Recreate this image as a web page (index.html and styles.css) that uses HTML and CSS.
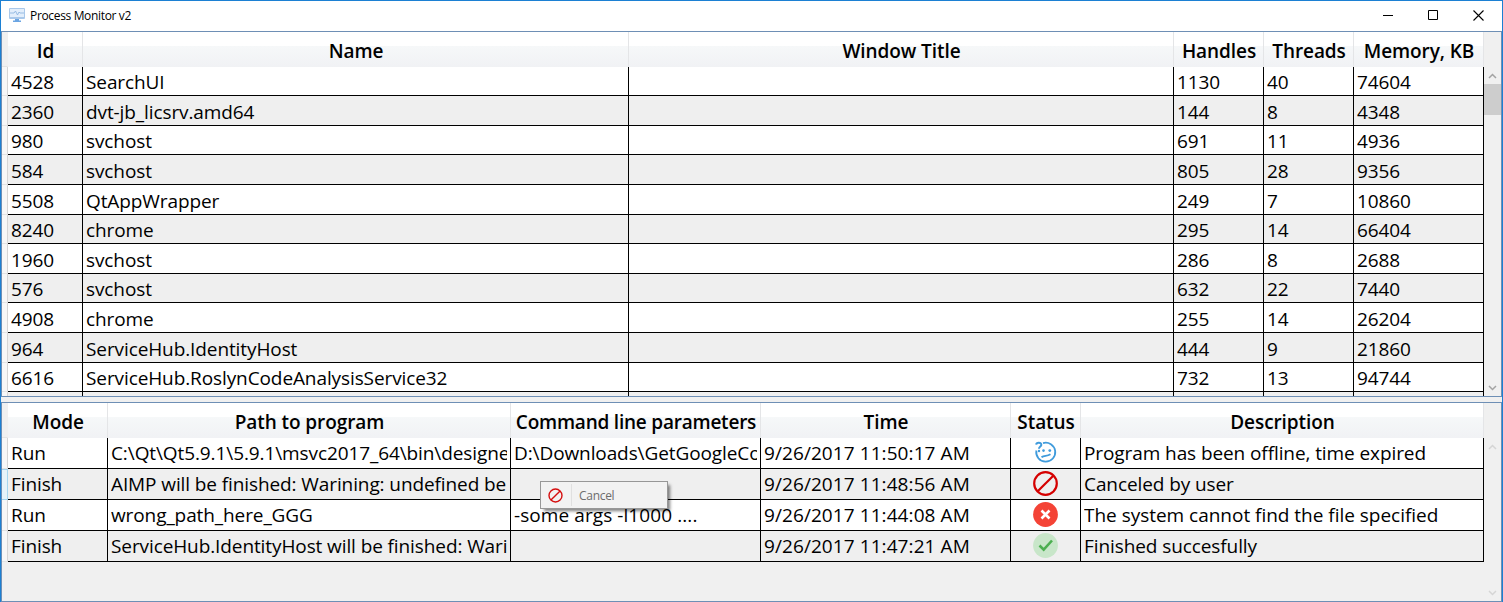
FILE: index.html
```html
<!DOCTYPE html>
<html lang="en">
<head>
<meta charset="utf-8">
<title>Process Monitor v2</title>
<link rel="stylesheet" href="styles.css">
</head>
<body>
<div class="window">
  <header class="titlebar">
    <svg class="app-icon" width="16" height="15" viewBox="0 0 16 15"><rect width="16" height="11" rx="1" fill="#a9c8ea"/><rect x="1" y="1" width="14" height="8" fill="#e2eefb"/><path d="M1 5h4l1.500-2 2 4 1.500-3 1 1h4" fill="none" stroke="#8fb6e0" stroke-width=".9"/><path d="M6 11h4v1.500h2V14H4v-1.500h2z" fill="#6ba5e3"/></svg>
    <span class="title">Process Monitor v2</span>
    <div class="controls">
      <svg width="11" height="11" viewBox="0 0 11 11"><path d="M0 5.500h10" stroke="#000"/></svg>
      <svg width="11" height="11" viewBox="0 0 11 11"><path d="M.5.500h9v9h-9z" fill="none" stroke="#000"/></svg>
      <svg width="11" height="11" viewBox="0 0 11 11"><path d="M.5.500l10 10M10.500.500l-10 10" stroke="#000" stroke-width="1.100"/></svg>
    </div>
  </header>

  <section class="pane processes">
    <div class="gutter"><i class="corner"></i><i class="h29"></i><i class="h30"></i><i class="h29"></i><i class="h30"></i><i class="h30"></i><i class="h29"></i><i class="h30"></i><i class="h29"></i><i class="h30"></i><i class="h30"></i><i class="h29"></i><i class="h30"></i></div>
    <div class="table">
      <div class="row head"><b>Id</b><b>Name</b><b>Window Title</b><b>Handles</b><b>Threads</b><b>Memory, KB</b></div>
      <div class="row h29"><div><span>4528</span></div><div><span>SearchUI</span></div><div></div><div><span>1130</span></div><div><span>40</span></div><div><span>74604</span></div></div>
      <div class="row h30 alt"><div><span>2360</span></div><div><span>dvt-jb_licsrv.amd64</span></div><div></div><div><span>144</span></div><div><span>8</span></div><div><span>4348</span></div></div>
      <div class="row h29"><div><span>980</span></div><div><span>svchost</span></div><div></div><div><span>691</span></div><div><span>11</span></div><div><span>4936</span></div></div>
      <div class="row h30 alt"><div><span>584</span></div><div><span>svchost</span></div><div></div><div><span>805</span></div><div><span>28</span></div><div><span>9356</span></div></div>
      <div class="row h30"><div><span>5508</span></div><div><span>QtAppWrapper</span></div><div></div><div><span>249</span></div><div><span>7</span></div><div><span>10860</span></div></div>
      <div class="row h29 alt"><div><span>8240</span></div><div><span>chrome</span></div><div></div><div><span>295</span></div><div><span>14</span></div><div><span>66404</span></div></div>
      <div class="row h30"><div><span>1960</span></div><div><span>svchost</span></div><div></div><div><span>286</span></div><div><span>8</span></div><div><span>2688</span></div></div>
      <div class="row h29 alt"><div><span>576</span></div><div><span>svchost</span></div><div></div><div><span>632</span></div><div><span>22</span></div><div><span>7440</span></div></div>
      <div class="row h30"><div><span>4908</span></div><div><span>chrome</span></div><div></div><div><span>255</span></div><div><span>14</span></div><div><span>26204</span></div></div>
      <div class="row h30 alt"><div><span>964</span></div><div><span>ServiceHub.IdentityHost</span></div><div></div><div><span>444</span></div><div><span>9</span></div><div><span>21860</span></div></div>
      <div class="row h29"><div><span>6616</span></div><div><span>ServiceHub.RoslynCodeAnalysisService32</span></div><div></div><div><span>732</span></div><div><span>13</span></div><div><span>94744</span></div></div>
      <div class="row h30 alt"><div></div><div></div><div></div><div></div><div></div><div></div></div>
    </div>
    <div class="scrollbar">
      <svg width="9" height="6" viewBox="0 0 9 6"><path d="M1 5l3.500-3.500L8 5" /></svg>
      <div class="thumb"></div>
      <svg class="down" width="9" height="6" viewBox="0 0 9 6"><path d="M1 1l3.500 3.500L8 1"/></svg>
    </div>
  </section>

  <section class="pane actions">
    <div class="gutter"><i class="corner"></i><i class="h31"></i><i class="h31 hot"></i><i class="h31"></i><i class="h31"></i></div>
    <div class="table">
      <div class="row head"><b>Mode</b><b>Path to program</b><b class="tight">Command line parameters</b><b>Time</b><b>Status</b><b>Description</b></div>
      <div class="row h31"><div><span>Run</span></div><div><span>C:\Qt\Qt5.9.1\5.9.1\msvc2017_64\bin\designe</span></div><div><span>D:\Downloads\GetGoogleCo</span></div><div class="time"><span>9/26/2017 11:50:17 AM</span></div>
        <div class="status"><svg width="25" height="25" viewBox="0 0 25 25" fill="none" stroke="#3f9bdc" stroke-width="1.800"><path d="M10 3.100a9.500 9.500 0 1 1-6.600 7.400"/><path d="M3.200 4.600C3.400 2 8.500 2 8.300 5 8.200 6.600 6 6.500 6 8.700" stroke-width="2"/><path d="M8.500 17.200c3-2.300 5-.4 9-2.900" stroke-width="1.900"/><circle cx="6" cy="11" r="1.200" fill="#3f9bdc" stroke="none"/><circle cx="10.500" cy="10.600" r="1.300" fill="#3f9bdc" stroke="none"/><circle cx="16.800" cy="10.600" r="1.400" fill="#3f9bdc" stroke="none"/></svg></div>
        <div class="desc"><span>Program has been offline, time expired</span></div></div>
      <div class="row h31 alt"><div><span>Finish</span></div><div><span>AIMP will be finished: Warining: undefined be</span></div><div></div><div class="time"><span>9/26/2017 11:48:56 AM</span></div>
        <div class="status"><svg width="25" height="25" viewBox="0 0 25 25" fill="none" stroke="#d50000" stroke-width="2.200"><circle cx="12.500" cy="12.500" r="11.300"/><path d="M4.700 20.300L20.300 4.700"/></svg></div>
        <div class="desc"><span>Canceled by user</span></div></div>
      <div class="row h31"><div><span>Run</span></div><div><span>wrong_path_here_GGG</span></div><div class="args"><span>-some args -l1000 ....</span></div><div class="time"><span>9/26/2017 11:44:08 AM</span></div>
        <div class="status"><svg width="25" height="25" viewBox="0 0 25 25"><circle cx="12.500" cy="12.500" r="12.400" fill="#f44336"/><path d="M8.500 8.500l8 8M16.500 8.500l-8 8" stroke="#fff" stroke-width="2.600"/></svg></div>
        <div class="desc wide"><span>The system cannot find the file specified</span></div></div>
      <div class="row h31 alt"><div><span>Finish</span></div><div><span>ServiceHub.IdentityHost will be finished: Wari</span></div><div></div><div class="time"><span>9/26/2017 11:47:21 AM</span></div>
        <div class="status"><svg width="25" height="25" viewBox="0 0 25 25"><circle cx="12.500" cy="12.500" r="12.400" fill="#c8e6c9"/><path d="M6.500 12.500l4.200 4.200 8.300-9.200" fill="none" stroke="#4caf50" stroke-width="2.600"/></svg></div>
        <div class="desc"><span>Finished succesfully</span></div></div>
    </div>
    <div class="scrollbar disabled">
      <svg width="9" height="6" viewBox="0 0 9 6"><path d="M1 5l3.500-3.500L8 5"/></svg>
      <svg class="down" width="9" height="6" viewBox="0 0 9 6"><path d="M1 1l3.500 3.500L8 1"/></svg>
    </div>
  </section>

  <div class="menu">
    <div class="menu-icon"><svg width="15" height="15" viewBox="0 0 15 15" fill="none" stroke="#d50f0f" stroke-width="1.400"><circle cx="7.500" cy="7.500" r="6.500"/><path d="M2.900 12.100l9.200-9.200"/></svg></div>
    <span>Cancel</span>
  </div>
</div>
</body>
</html>
```
FILE: styles.css
```css
* { box-sizing: border-box; }
body { margin: 0; overflow: hidden; background: #f0f0f0; color: #000; font-family: "Open Sans", "Noto Sans", sans-serif; }
svg { display: block; }
.window { position: relative; width: 1503px; height: 602px; display: flex; flex-direction: column; border: 1px solid #1c80d3; border-bottom: 0; background: #f0f0f0; }
.titlebar { flex: none; height: 30px; display: flex; align-items: center; padding: 0 17px 0 8px; background: #fff; }
.app-icon { margin-bottom: 1px; }
.title { margin-left: 5px; font-size: 12px; line-height: 16px; letter-spacing: -0.34px; }
.controls { margin-left: auto; margin-right: 1px; display: flex; gap: 34px; padding-bottom: 2px; }

.pane { flex: none; display: flex; border: 1px solid #6e8fb5; overflow: hidden; }
.processes { height: 366px; margin-bottom: 5px; }
.actions { height: 200px; }
.gutter { flex: none; width: 6px; }
.gutter i { display: block; background: #f7f7f7; border-right: 1px solid #d5d5d5; border-bottom: 1px solid #e3e3e3; }
.gutter .corner { height: 35px; background: #f0f0f0; border-right-color: #f0f0f0; }
.gutter .hot { background: #e6f2f9; border: 1px solid #a6d5ee; border-left: 0; }

.table { flex: none; width: 1476px; }
.row { display: grid; font-size: 19px; line-height: 28px; }
.processes .row { grid-template-columns: 75px 546px 545px 90px 90px 130px; }
.actions .row { grid-template-columns: 100px 403px 250px 250px 70px 403px; }
.row > div { border-right: 1px solid #000; border-bottom: 1px solid #000; padding: 0 3px; background: #fff; white-space: nowrap; min-width: 0; display: flex; align-items: center; overflow: hidden; }
.processes .row > div { padding-top: 2px; }
.row.alt > div { background: #efefef; }
.row span { flex: 1; min-width: 0; overflow: hidden; letter-spacing: -0.1px; }
.row .time span { letter-spacing: 0.08px; }
.row .args span { letter-spacing: 0.08px; }
.row .desc span { letter-spacing: -0.09px; }
.row .wide span { letter-spacing: -0.02px; }
.row.head { height: 35px; line-height: 38px; }
.head b { font-weight: 600; text-align: center; white-space: nowrap; letter-spacing: -0.08px; border-bottom: 1px solid #dcdddf; background: linear-gradient(90deg, #e4e5e7, #e4e5e7) right / 1px 100% no-repeat, linear-gradient(#fff 0, #fff 14px, #f6f8f9 14px, #f0f1f4 100%); }
.head .tight { letter-spacing: -0.22px; }
.h29 { height: 29px; }
.h30 { height: 30px; }
.h31 { height: 31px; }
.row .status { justify-content: center; padding: 0; }
.status svg { margin-bottom: 1px; }

.scrollbar { flex: none; width: 17px; display: flex; flex-direction: column; align-items: center; padding-top: 41px; fill: none; stroke: #a3a3a3; stroke-width: 1.5; }
.thumb { width: 17px; height: 31px; margin-top: 5px; background: #cdcdcd; }
.scrollbar .down { margin-top: auto; margin-bottom: 5px; }
.scrollbar.disabled { stroke: #d5d5d5; }

.menu { position: absolute; left: 539px; top: 480px; width: 128px; height: 28px; display: flex; align-items: center; border: 1px solid #979797; background: #f2f2f2; box-shadow: 3px 3px 3px -1px rgba(0, 0, 0, .5); font-size: 12px; letter-spacing: -0.3px; color: #6d6d6d; }
.menu-icon { width: 31px; height: 22px; display: flex; align-items: center; padding-left: 7px; border-right: 1px solid #e0e0e0; }
.menu span { margin-left: 7px; padding-top: 1px; }
```
